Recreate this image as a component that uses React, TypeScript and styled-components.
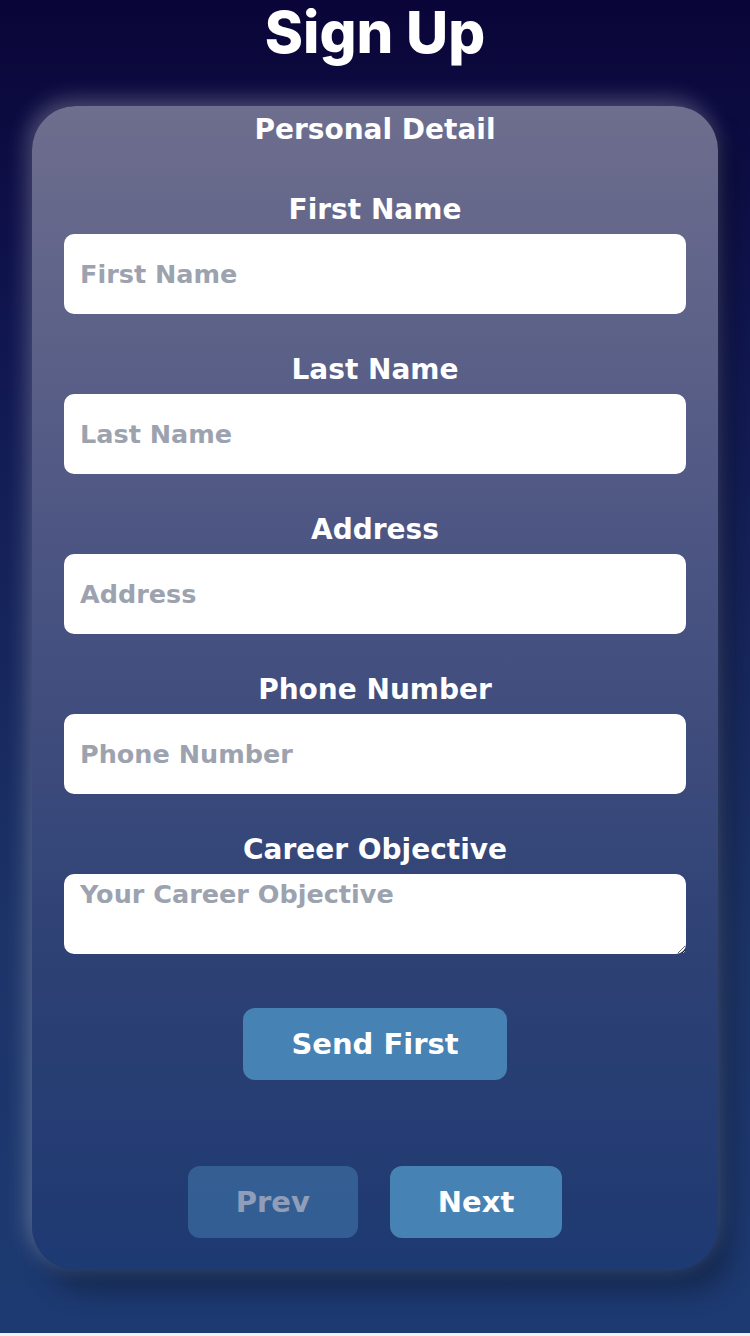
import styled, { createGlobalStyle } from "styled-components";

const GlobalStyle = createGlobalStyle`
  html, body {
    margin: 0;
    padding: 0;
    background: #f2f2f2;
  }
  * {
    box-sizing: border-box;
  }
`;

const fields = [
  { label: "First Name", placeholder: "First Name" },
  { label: "Last Name", placeholder: "Last Name" },
  { label: "Address", placeholder: "Address" },
  { label: "Phone Number", placeholder: "Phone Number" },
];

const S = {
  Page: styled.div`
    height: 1333px;
    padding: 0 32px;
    display: flex;
    flex-direction: column;
    align-items: stretch;
    background: linear-gradient(180deg, #0a0538 0%, #101650 25%, #1c3468 70%, #1d3a72 100%);
    font-family: "DejaVu Sans", Inter, sans-serif;
    color: #fff;
  `,
  Title: styled.h1`
    margin: 0;
    font-family: Inter, "DejaVu Sans", sans-serif;
    font-size: 58px;
    line-height: 64px;
    font-weight: 800;
    text-align: center;
  `,
  Card: styled.form`
    margin-top: 42px;
    padding: 8px 32px 32px;
    border-radius: 44px;
    display: flex;
    flex-direction: column;
    background: linear-gradient(180deg, #6e6e8e 0%, #4a5482 40%, #2c4074 75%, #1e3a72 100%);
    box-shadow: -4px -6px 22px rgba(255, 255, 255, 0.28), 14px 22px 26px rgba(0, 0, 0, 0.28);
  `,
  Section: styled.h2`
    margin: 0 0 48px;
    font-size: 28px;
    line-height: 32px;
    font-weight: 700;
    text-align: center;
  `,
  Fields: styled.div`
    display: flex;
    flex-direction: column;
    gap: 40px;
  `,
  Field: styled.label`
    display: flex;
    flex-direction: column;
    gap: 8px;
  `,
  Label: styled.span`
    font-size: 28px;
    line-height: 32px;
    font-weight: 700;
    text-align: center;
  `,
  Input: styled.input`
    display: block;
    width: 100%;
    height: 80px;
    padding: 0 16px;
    border: none;
    border-radius: 10px;
    background: #fff;
    font-family: inherit;
    font-size: 25.5px;
    font-weight: 700;
    color: #111827;
    outline: none;
    &::placeholder {
      color: #9ca3af;
    }
  `,
  TextArea: styled.textarea`
    display: block;
    width: 100%;
    height: 80px;
    padding: 5px 16px;
    border: none;
    border-radius: 10px;
    background: #fff;
    font-family: inherit;
    font-size: 25.5px;
    font-weight: 700;
    color: #111827;
    outline: none;
    &::placeholder {
      color: #9ca3af;
    }
  `,
  SendRow: styled.div`
    display: flex;
    justify-content: center;
    margin-top: 54px;
  `,
  NavRow: styled.div`
    display: flex;
    justify-content: center;
    gap: 32px;
    margin-top: 86px;
  `,
  Button: styled.button<{ $disabled?: boolean }>`
    height: 72px;
    padding: 0 48px;
    border: none;
    border-radius: 12px;
    background: #4682b4;
    color: #fff;
    font-family: inherit;
    font-size: 29px;
    font-weight: 700;
    opacity: ${(p) => (p.$disabled ? 0.5 : 1)};
    cursor: ${(p) => (p.$disabled ? "not-allowed" : "pointer")};
  `,
};

export default function App() {
  return (
    <>
      <GlobalStyle />
      <S.Page>
        <S.Title>Sign Up</S.Title>
        <S.Card onSubmit={(e) => e.preventDefault()}>
          <S.Section>Personal Detail</S.Section>
          <S.Fields>
            {fields.map((f) => (
              <S.Field key={f.label}>
                <S.Label>{f.label}</S.Label>
                <S.Input placeholder={f.placeholder} />
              </S.Field>
            ))}
            <S.Field>
              <S.Label>Career Objective</S.Label>
              <S.TextArea placeholder="Your Career Objective" />
            </S.Field>
          </S.Fields>
          <S.SendRow>
            <S.Button type="button">Send First</S.Button>
          </S.SendRow>
          <S.NavRow>
            <S.Button type="button" $disabled disabled>
              Prev
            </S.Button>
            <S.Button type="button">Next</S.Button>
          </S.NavRow>
        </S.Card>
      </S.Page>
    </>
  );
}
